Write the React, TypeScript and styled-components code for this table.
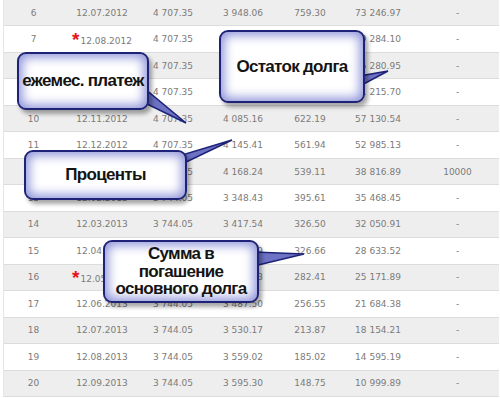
import React from "react";
import styled, { createGlobalStyle } from "styled-components";

const Global = createGlobalStyle`
  html, body { margin: 0; padding: 0; background: #ffffff; }
  body { font-family: "DejaVu Sans", Verdana, sans-serif; }
`;

const Page = styled.div`
  position: relative;
  width: 500px;
  height: 398px;
  overflow: hidden;
  background: #ffffff;
`;

const Table = styled.div`
  margin-left: 3px;
  width: 495px;
  border-left: 1px solid #e6e6e6;
  display: flex;
  flex-direction: column;
`;

const Row = styled.div<{ $shade: boolean }>`
  display: grid;
  grid-template-columns: 59px 78px 64px 76px 58px 78px 81px;
  height: 26.47px;
  box-sizing: border-box;
  border-bottom: 1px solid #dcdcdc;
  background: ${(p) => (p.$shade ? "#eeeeee" : "#ffffff")};
`;

const Cell = styled.div`
  display: flex;
  align-items: center;
  justify-content: center;
  font-family: "DejaVu Sans", Verdana, sans-serif;
  font-size: 9px;
  color: #7b7b7b;
  white-space: nowrap;
`;

const Star = styled.span`
  font-family: "Liberation Sans", Arial, sans-serif;
  font-weight: bold;
  font-size: 19px;
  line-height: 1;
  color: #e8141b;
  margin-right: 1px;
  align-self: center;
`;

const Lowered = styled.span`
  margin-top: 3px;
`;

const Callout = styled.div<{ $x: number; $y: number; $w: number; $h: number }>`
  position: absolute;
  left: ${(p) => p.$x}px;
  top: ${(p) => p.$y}px;
  width: ${(p) => p.$w}px;
  height: ${(p) => p.$h}px;
  box-sizing: border-box;
  border: 2px solid #1f2378;
  border-radius: 9px;
  background: #ffffff;
  box-shadow: inset 0 0 11px 3px #8a90d8, 3px 4px 4px rgba(0, 0, 0, 0.35);
  display: flex;
  align-items: center;
  justify-content: center;
  text-align: center;
  font-family: "Liberation Sans", Arial, sans-serif;
  font-weight: bold;
  font-size: 17px;
  letter-spacing: -0.7px;
  line-height: 17.5px;
  color: #141414;
  z-index: 2;
`;

const Tails = styled.svg`
  position: absolute;
  left: 0;
  top: 0;
  z-index: 1;
  pointer-events: none;
`;

type R = [string, string, string, string, string, string, string, boolean?];

const rows: R[] = [
  ["6", "12.07.2012", "4 707.35", "3 948.06", "759.30", "73 246.97", "-"],
  ["7", "12.08.2012", "4 707.35", "3 962.87", "744.48", "69 284.10", "-", true],
  ["8", "12.09.2012", "4 707.35", "4 003.15", "704.20", "65 280.95", "-"],
  ["9", "12.10.2012", "4 707.35", "4 065.25", "642.10", "61 215.70", "-"],
  ["10", "12.11.2012", "4 707.35", "4 085.16", "622.19", "57 130.54", "-"],
  ["11", "12.12.2012", "4 707.35", "4 145.41", "561.94", "52 985.13", "-"],
  ["12", "12.01.2013", "4 707.35", "4 168.24", "539.11", "38 816.89", "10000"],
  ["13", "12.02.2013", "3 744.05", "3 348.43", "395.61", "35 468.45", "-"],
  ["14", "12.03.2013", "3 744.05", "3 417.54", "326.50", "32 050.91", "-"],
  ["15", "12.04.2013", "3 744.05", "3 417.39", "326.66", "28 633.52", "-"],
  ["16", "12.05.2013", "3 744.05", "3 461.63", "282.41", "25 171.89", "-", true],
  ["17", "12.06.2013", "3 744.05", "3 487.50", "256.55", "21 684.38", "-"],
  ["18", "12.07.2013", "3 744.05", "3 530.17", "213.87", "18 154.21", "-"],
  ["19", "12.08.2013", "3 744.05", "3 559.02", "185.02", "14 595.19", "-"],
  ["20", "12.09.2013", "3 744.05", "3 595.30", "148.75", "10 999.89", "-"],
];

const tails = [
  "145,89 145,103 186,123",
  "360,76 360,86 388,71",
  "182,155 182,164 232,140",
  "254,252 254,266 304,254",
];

export default function App() {
  return (
    <>
      <Global />
      <Page>
        <Table>
          {rows.map((r, i) => (
            <Row key={r[0]} $shade={i % 2 === 0}>
              <Cell>{r[0]}</Cell>
              <Cell>
                {r[7] ? (
                  <>
                    <Star>*</Star>
                    <Lowered>{r[1]}</Lowered>
                  </>
                ) : (
                  r[1]
                )}
              </Cell>
              <Cell>{r[2]}</Cell>
              <Cell>{r[3]}</Cell>
              <Cell>{r[4]}</Cell>
              <Cell>{r[5]}</Cell>
              <Cell>{r[6]}</Cell>
            </Row>
          ))}
        </Table>

        <Tails width="500" height="398" viewBox="0 0 500 398">
          {tails.map((pts) => (
            <polygon
              key={pts}
              points={pts}
              fill="#6d72c4"
              stroke="#1f2378"
              strokeWidth="1.6"
              strokeLinejoin="miter"
            />
          ))}
        </Tails>

        <Callout $x={17} $y={52} $w={132} $h={58}>ежемес. платеж</Callout>
        <Callout $x={219} $y={30} $w={146} $h={73}>Остаток долга</Callout>
        <Callout $x={24} $y={150} $w={163} $h={50}>Проценты</Callout>
        <Callout $x={103} $y={240} $w={156} $h={63}>
          Сумма в
          <br />
          погашение
          <br />
          основного долга
        </Callout>
      </Page>
    </>
  );
}
